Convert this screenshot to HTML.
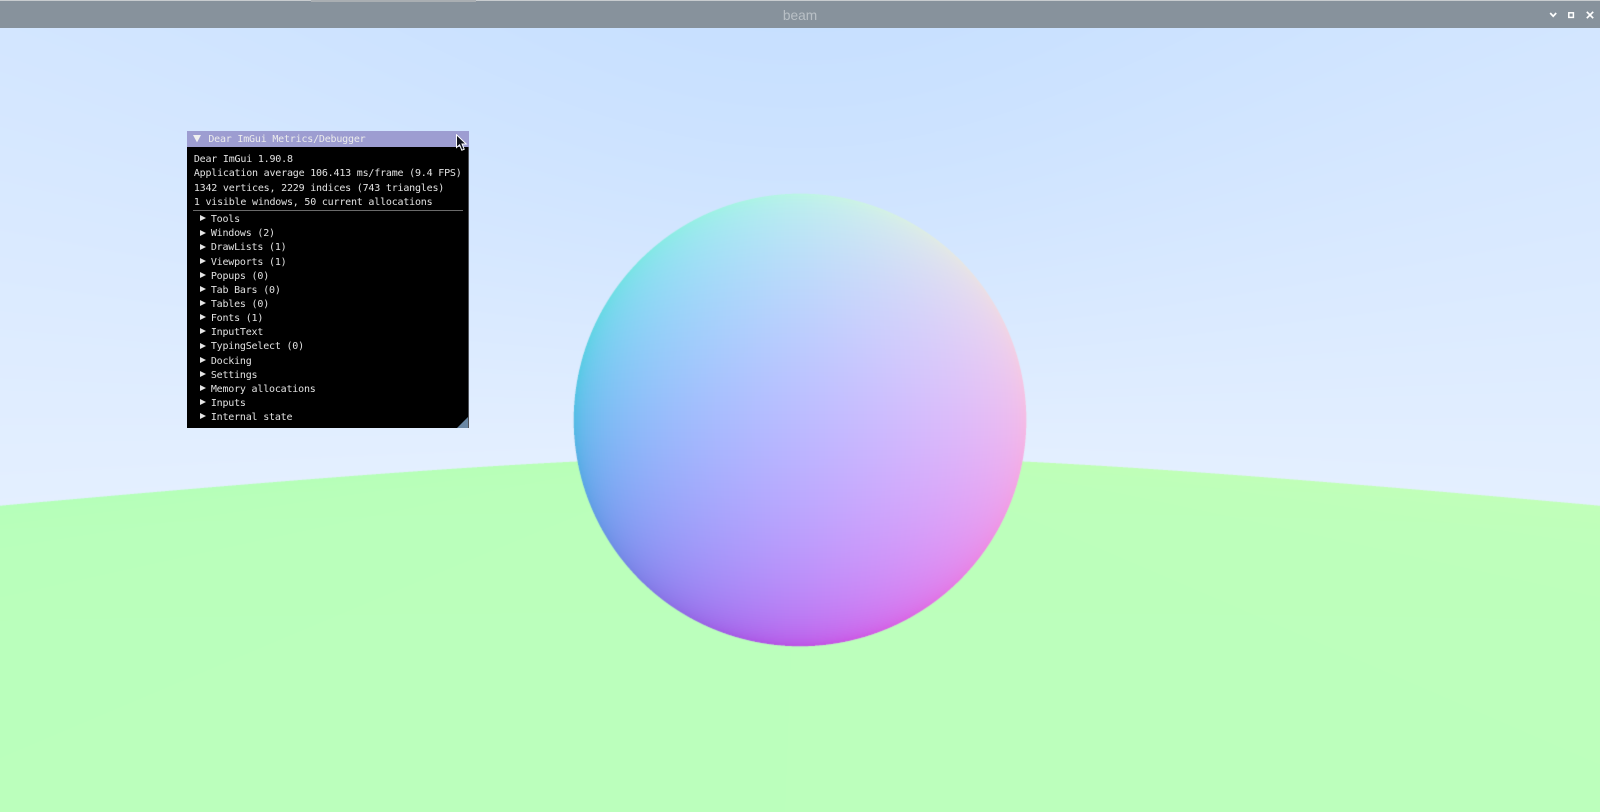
<!DOCTYPE html>
<html lang="en">
<head>
<meta charset="utf-8">
<title>beam</title>
<style>
html,body{margin:0;padding:0;width:1600px;height:812px;overflow:hidden;background:#bcffbc;}
#fb{position:absolute;left:0;top:28px;width:1600px;height:784px;background:linear-gradient(#c8e0ff 0,#e2eeff 60%,#bcffbc 60%);}
#fbs{position:absolute;left:574px;top:194px;width:452px;height:452px;border-radius:50%;background:radial-gradient(circle at 50% 50%,#b4b8ff,#b4b8ff00 75%),linear-gradient(135deg,#8fe8e0,#d0a0f0);}
canvas{position:absolute;left:0;top:28px;display:block;}
#bar{position:absolute;left:0;top:0;width:1600px;height:28px;background:#87929c;}
#bar .top{position:absolute;left:0;top:0;width:1600px;height:1px;background:#c8cccf;}
#bar .seg{position:absolute;left:311px;top:0;width:165px;height:2px;background:#a9aeb2;}
#bar .t{position:absolute;left:0;top:0;width:1600px;text-align:center;font:13.7px/31px "Liberation Sans",sans-serif;color:#b9c0c6;}
#bar svg{position:absolute;left:1540px;top:0;}
#win{position:absolute;left:187px;top:131px;width:282px;height:297px;background:#000;overflow:hidden;}
#edge{position:absolute;left:468px;top:147px;width:1px;height:281px;background:#50535a;}
#tb{position:absolute;left:0;top:0;width:282px;height:16px;background:#9d9dd1;}
.l{position:absolute;white-space:pre;font:10px/14px "DejaVu Sans Mono",monospace;letter-spacing:-.2px;color:#e2e2e2;filter:blur(.3px);margin-top:1.2px;margin-left:-.2px;}
#sep{position:absolute;left:6px;top:79px;width:270px;height:1px;background:#6a6a6a;}
.a{position:absolute;left:13px;width:0;height:0;margin-top:-.5px;border-left:6px solid #e6e6e6;border-top:3.8px solid transparent;border-bottom:3.8px solid transparent;}
#grip{position:absolute;left:270px;top:285px;width:0;height:0;border-bottom:12px solid #6a87a4;border-left:12px solid transparent;}
#cur{position:absolute;left:455px;top:134px;}
</style>
</head>
<body>
<div id="fb"></div>
<div id="fbs"></div>
<canvas id="c" width="1600" height="784"></canvas>
<div id="bar">
  <div class="top"></div><div class="seg"></div>
  <div class="t">beam</div>
  <svg width="60" height="28" viewBox="0 0 60 28" fill="none" stroke="#fff" stroke-width="1.7">
    <path d="M10.2 13L13.2 16.2L16.2 13"/>
    <rect x="28.8" y="12.8" width="4.6" height="4.6" stroke-width="1.5"/>
    <path d="M46.8 11.8L53.2 18.2M53.2 11.8L46.8 18.2"/>
  </svg>
</div>
<div id="win">
  <div id="tb"></div>
  <svg style="position:absolute;left:6px;top:4px" width="9" height="8"><path d="M0 0H8L4 7.4Z" fill="#f0f0f0"/></svg>
  <div class="l" style="left:21.5px;top:1px;color:#ececec">Dear ImGui Metrics/Debugger</div>
  <div class="l" style="left:7px;top:21px">Dear ImGui 1.90.8</div>
  <div class="l" style="left:7px;top:35.3px">Application average 106.413 ms/frame (9.4 FPS)</div>
  <div class="l" style="left:7px;top:49.5px">1342 vertices, 2229 indices (743 triangles)</div>
  <div class="l" style="left:7px;top:63.6px">1 visible windows, 50 current allocations</div>
  <div id="sep"></div>
  <div class="a" style="top:84.8px"></div><div class="l" style="left:24px;top:81px">Tools</div>
  <div class="a" style="top:99px"></div><div class="l" style="left:24px;top:95.2px">Windows (2)</div>
  <div class="a" style="top:113px"></div><div class="l" style="left:24px;top:109.3px">DrawLists (1)</div>
  <div class="a" style="top:127.2px"></div><div class="l" style="left:24px;top:123.4px">Viewports (1)</div>
  <div class="a" style="top:141.3px"></div><div class="l" style="left:24px;top:137.6px">Popups (0)</div>
  <div class="a" style="top:155.5px"></div><div class="l" style="left:24px;top:151.7px">Tab Bars (0)</div>
  <div class="a" style="top:169.6px"></div><div class="l" style="left:24px;top:165.8px">Tables (0)</div>
  <div class="a" style="top:183.7px"></div><div class="l" style="left:24px;top:180px">Fonts (1)</div>
  <div class="a" style="top:197.9px"></div><div class="l" style="left:24px;top:194.1px">InputText</div>
  <div class="a" style="top:212px"></div><div class="l" style="left:24px;top:208.3px">TypingSelect (0)</div>
  <div class="a" style="top:226.1px"></div><div class="l" style="left:24px;top:222.4px">Docking</div>
  <div class="a" style="top:240.3px"></div><div class="l" style="left:24px;top:236.5px">Settings</div>
  <div class="a" style="top:254.4px"></div><div class="l" style="left:24px;top:250.7px">Memory allocations</div>
  <div class="a" style="top:268.5px"></div><div class="l" style="left:24px;top:264.8px">Inputs</div>
  <div class="a" style="top:282.7px"></div><div class="l" style="left:24px;top:279px">Internal state</div>
  <div id="grip"></div>
</div>
<div id="edge"></div>
<svg id="cur" width="14" height="18" viewBox="0 0 14 18"><path d="M1.5 .8V13.5L4.6 10.8L6.8 16.2L9.2 15.2L7 10H11.2Z" fill="#10131c" stroke="#fff" stroke-width="1"/></svg>
<script>
(function(){
var cv=document.getElementById('c'),g=cv.getContext('2d'),W=1600,H=784,im=g.createImageData(W,H),D=im.data;
var S=3,col=[0,0,0];
function srgb(x){x=Math.max(0,Math.min(1,x));return 255*(x<=.0031308?12.92*x:1.055*Math.pow(x,1/2.4)-.055);}
function trace(u,v){
  var a=u*u+v*v+1;
  var h1=1,c1=1-.25,d1=h1*h1-a*c1;
  if(d1>0){
    var t=(h1-Math.sqrt(d1))/a;
    col[0]=.5*(t*u/.5+1);col[1]=.5*(t*v/.5+1);col[2]=.5*((1-t)/.5+1);return;
  }
  var h2=v*-100.5+1,c2=100.5*100.5+1-10000,d2=h2*h2-a*c2;
  if(d2>0){
    var q=h2-Math.sqrt(d2);
    if(q>0){
      var t2=q/a;
      col[0]=.5*(t2*u/100+1);col[1]=.5*((t2*v+100.5)/100+1);col[2]=.5*((1-t2)/100+1);return;
    }
  }
  var l=Math.sqrt(a),k=.5*(v/l+1);
  col[0]=1-.5*k;col[1]=1-.3*k;col[2]=1;
}
for(var j=0,p=0;j<H;j++)for(var i=0;i<W;i++,p+=4){
  var R=0,G=0,B=0;
  for(var sy=0;sy<S;sy++)for(var sx=0;sx<S;sx++){
    trace((i+(sx+.5)/S-800)/392,(392-j-(sy+.5)/S)/392);
    R+=col[0];G+=col[1];B+=col[2];
  }
  D[p]=srgb(R/(S*S));D[p+1]=srgb(G/(S*S));D[p+2]=srgb(B/(S*S));D[p+3]=255;
}
g.putImageData(im,0,0);
})();
</script>
</body>
</html>
